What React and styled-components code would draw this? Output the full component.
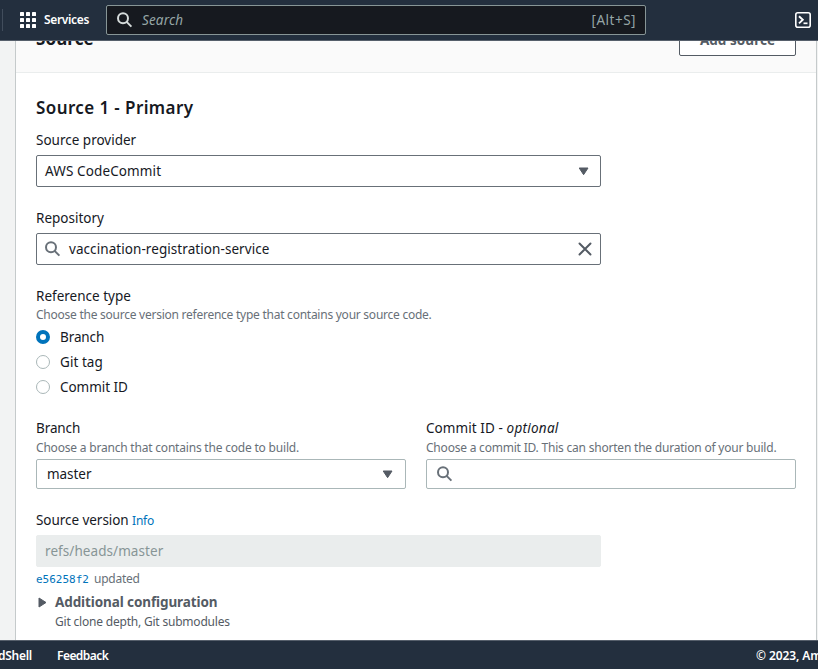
import React from 'react';
import styled, { createGlobalStyle } from 'styled-components';

const Global = createGlobalStyle`
  * { box-sizing: border-box; }
  body { margin: 0; background: #f2f3f3; color: #16191f; font: 14px/20px "Noto Sans", "Open Sans", sans-serif; overflow: hidden; }
`;

const Page = styled.div`
  width: 818px; height: 669px; overflow: hidden;
  display: flex; flex-direction: column;
`;
const TopBar = styled.header`
  flex: none; height: 41px; padding-left: 2px; padding-right: 7px;
  display: flex; align-items: center;
  background: #232f3e; border-bottom: 1px solid #565f6b; color: #fff;
`;
const Divider = styled.span`width: 1px; height: 22px; background: #414d5c;`;
const ServicesButton = styled.div`
  display: flex; align-items: center; gap: 8px; margin-left: 16px; width: 87px;
  font-size: 12px; font-weight: 600; letter-spacing: ${p => p.$track}px; white-space: nowrap;
`;
const SearchBox = styled.div`
  display: flex; align-items: center; width: 540px; height: 30px; padding: 0 9px 0 10px;
  background: #16191f; border: 1px solid #879596; border-radius: 2px; color: #95a5a6;
`;
const SearchHint = styled.span`
  flex: 1; margin-left: 9px; font-style: italic; font-size: 13.5px; letter-spacing: ${p => p.$track}px;
`;
const Shortcut = styled.span`font-size: 13.5px; letter-spacing: ${p => p.$track}px;`;
const ShellSlot = styled.div`margin-left: auto; display: flex;`;

const Main = styled.main`flex: 1; min-height: 0; padding: 0 1px 0 15px; display: flex;`;
const Panel = styled.section`
  flex: 1; background: #fff; overflow: hidden;
  border: solid #c5cacb; border-width: 0 1px;
`;
const PanelHead = styled.div`
  height: 32px; padding: 0 20px; display: flex; justify-content: space-between;
  background: #fafafa; border-bottom: 1px solid #eaeded;
`;
const PanelTitle = styled.h2`
  margin: -14px 0 0; font-size: 17px; line-height: 24px; font-weight: 700; letter-spacing: ${p => p.$track}px;
`;
const AddButton = styled.button`
  width: 117px; height: 32px; margin-top: -17px; padding: 0; background: #fff;
  border: 1px solid #545b64; border-radius: 2px; color: #545b64;
  font: 700 13.5px/20px "Noto Sans", sans-serif; letter-spacing: ${p => p.$track}px;
`;
const Form = styled.div`padding: 23px 20px 0; display: flex; flex-direction: column;`;
const Heading = styled.h3`
  margin: 0; height: 34px; font-size: 17px; line-height: 24px; font-weight: 600;
  letter-spacing: ${p => p.$track}px;
`;
const Field = styled.div`margin-bottom: ${p => p.$after}px; white-space: nowrap;`;
const Label = styled.div`
  height: ${p => p.$h || 25}px; line-height: 20px; font-size: 13.5px; letter-spacing: ${p => p.$track}px;
  em { letter-spacing: ${p => p.$emTrack}px; }
`;
const Hint = styled.div`
  height: ${p => p.$h || 19}px; padding-top: 1px; line-height: 18px; font-size: 12px;
  color: #687078; letter-spacing: ${p => p.$track}px;
`;
const Control = styled.div`
  display: flex; align-items: center;
  width: ${p => p.$w || 565}px; height: ${p => p.$h || 32}px;
  padding: 0 ${p => p.$right || 11}px 0 ${p => p.$left || 8}px;
  border: 1px solid ${p => (p.$soft ? '#aab7b8' : '#687078')}; border-radius: 2px; background: #fff;
`;
const ReadOnly = styled(Control)`background: #eaeded; border-color: #eaeded; color: #879596;`;
const Value = styled.span`
  flex: 1; font-size: 13.5px; line-height: 20px; letter-spacing: ${p => p.$track}px; margin-left: ${p => p.$gap || 0}px;
`;
const RadioRow = styled.label`display: flex; align-items: center; gap: 10px; height: 25px;`;
const Radio = styled.span`
  width: 14px; height: 14px; border-radius: 50%; background: #fff;
  border: ${p => (p.$on ? '4px solid #0073bb' : '1px solid #aab7b8')};
`;
const RadioText = styled.span`font-size: 13.5px; letter-spacing: ${p => p.$track}px;`;
const Columns = styled.div`display: grid; grid-template-columns: 370px 370px; gap: 20px;`;
const Info = styled.a`color: #0073bb; font-size: 12px; letter-spacing: ${p => p.$track}px;`;
const Status = styled.div`
  height: 25px; padding-top: 2px; line-height: 20px; font-size: 12px; color: #687078; letter-spacing: ${p => p.$track}px;
`;
const Hash = styled.a`
  color: #0073bb; font: 11px/18px "DejaVu Sans Mono", monospace; letter-spacing: 0; margin-right: 5px;
`;
const Expander = styled.div`display: flex; gap: 8px; padding-left: 2px; white-space: nowrap; color: #545b64;`;
const ExpanderTitle = styled.div`font-size: 13.5px; font-weight: 700; line-height: 20px; letter-spacing: ${p => p.$track}px;`;
const ExpanderNote = styled.div`margin-top: 1px; font-size: 12px; line-height: 18px; letter-spacing: ${p => p.$track}px;`;
const ExpandIcon = styled.div`padding-top: 5px; width: 9px; line-height: 0;`;
const Footer = styled.footer`
  flex: none; height: 29px; border-top: 1px solid #565f6b; background: #232f3e; color: #fff;
  display: flex; align-items: center; padding-top: 2px; font-size: 12px; font-weight: 600; white-space: nowrap;
`;
const ShellLink = styled.span`
  width: 32px; display: flex; justify-content: flex-end; overflow: hidden; letter-spacing: ${p => p.$track}px;
`;
const Feedback = styled.span`margin-left: 25px; letter-spacing: ${p => p.$track}px;`;
const Copyright = styled.span`margin-left: auto; width: 62px; overflow: hidden; letter-spacing: ${p => p.$track}px;`;

const Magnifier = ({ color = '#687078' }) => (
  <svg width="16" height="16" viewBox="0 0 16 16" fill="none" stroke={color} strokeWidth="2">
    <circle cx="6" cy="6.3" r="5" />
    <path d="M9.6 9.9 14.4 14.6" />
  </svg>
);
const Caret = () => (
  <svg width="11" height="9" viewBox="0 0 11 9">
    <path d="M1.2 1h8.8L5.6 7.7z" fill="#545b64" stroke="#545b64" strokeLinejoin="round" />
  </svg>
);
const Cross = () => (
  <svg width="14" height="14" viewBox="0 0 14 14" fill="none" stroke="#545b64" strokeWidth="2" strokeLinecap="round">
    <path d="M1.5 1.5 12.5 12.5M12.5 1.5 1.5 12.5" />
  </svg>
);
const Grid = () => (
  <svg width="17" height="16" viewBox="0 0 17 16" fill="#fff">
    {[0, 6, 12].flatMap(y => [1, 7, 13].map(x => <rect key={`${x}-${y}`} x={x} y={y} width="4" height="4" rx=".6" />))}
  </svg>
);
const Shell = () => (
  <svg width="16" height="16" viewBox="0 0 16 16" fill="none" stroke="#fff">
    <rect x=".8" y=".8" width="14.4" height="14.4" rx="2" strokeWidth="1.6" />
    <path d="M4 4.2 7.8 7.8 4 11.4" strokeWidth="1.9" />
    <path d="M8.5 11.3h4" strokeWidth="1.7" />
  </svg>
);

export default function App() {
  return (
    <Page>
      <Global />
      <TopBar>
        <Divider />
        <ServicesButton $track={-0.35}><Grid /><span>Services</span></ServicesButton>
        <SearchBox>
          <Magnifier color="#d5dbdb" />
          <SearchHint $track={0.15}>Search</SearchHint>
          <Shortcut $track={0.5}>[Alt+S]</Shortcut>
        </SearchBox>
        <ShellSlot><Shell /></ShellSlot>
      </TopBar>
      <Main>
        <Panel>
          <PanelHead>
            <PanelTitle $track={0.1}>Source</PanelTitle>
            <AddButton $track={0.05}>Add source</AddButton>
          </PanelHead>
          <Form>
            <Heading $track={0.4}>Source 1 - Primary</Heading>
            <Field $after={21}>
              <Label $track={0}>Source provider</Label>
              <Control><Value $track={0.12}>AWS CodeCommit</Value><Caret /></Control>
            </Field>
            <Field $after={21}>
              <Label $track={0}>Repository</Label>
              <Control $right={8}>
                <Magnifier />
                <Value $gap={8} $track={0.07}>vaccination-registration-service</Value>
                <Cross />
              </Control>
            </Field>
            <Field $after={19}>
              <Label $h={19} $track={0}>Reference type</Label>
              <Hint $track={-0.25}>Choose the source version reference type that contains your source code.</Hint>
              <RadioRow><Radio $on /><RadioText $track={-0.1}>Branch</RadioText></RadioRow>
              <RadioRow><Radio /><RadioText $track={0.05}>Git tag</RadioText></RadioRow>
              <RadioRow><Radio /><RadioText $track={-0.05}>Commit ID</RadioText></RadioRow>
            </Field>
            <Columns>
              <Field $after={21}>
                <Label $h={20} $track={-0.1}>Branch</Label>
                <Hint $h={21} $track={-0.2}>Choose a branch that contains the code to build.</Hint>
                <Control $soft $w={370} $h={30} $left={10} $right={12}><Value $track={-0.05}>master</Value><Caret /></Control>
              </Field>
              <Field $after={21}>
                <Label $h={20} $track={0.08} $emTrack={0.25}>Commit ID - <em>optional</em></Label>
                <Hint $h={21} $track={-0.21}>Choose a commit ID. This can shorten the duration of your build.</Hint>
                <Control $soft $w={370} $h={30} $left={10}><Magnifier /></Control>
              </Field>
            </Columns>
            <Field $after={0}>
              <Label $track={-0.05}>Source version <Info $track={-0.25}>Info</Info></Label>
              <ReadOnly><Value $track={0.07}>refs/heads/master</Value></ReadOnly>
              <Status $track={-0.25}><Hash>e56258f2</Hash>updated</Status>
            </Field>
            <Expander>
              <ExpandIcon>
                <svg width="9" height="11" viewBox="0 0 9 11">
                  <path d="M1 1v9L8 5.5z" fill="#545b64" stroke="#545b64" strokeLinejoin="round" />
                </svg>
              </ExpandIcon>
              <div>
                <ExpanderTitle $track={-0.1}>Additional configuration</ExpanderTitle>
                <ExpanderNote $track={-0.2}>Git clone depth, Git submodules</ExpanderNote>
              </div>
            </Expander>
          </Form>
        </Panel>
      </Main>
      <Footer>
        <ShellLink $track={-0.25}>CloudShell</ShellLink>
        <Feedback $track={-0.55}>Feedback</Feedback>
        <Copyright $track={-0.1}>© 2023, Amazon</Copyright>
      </Footer>
    </Page>
  );
}
